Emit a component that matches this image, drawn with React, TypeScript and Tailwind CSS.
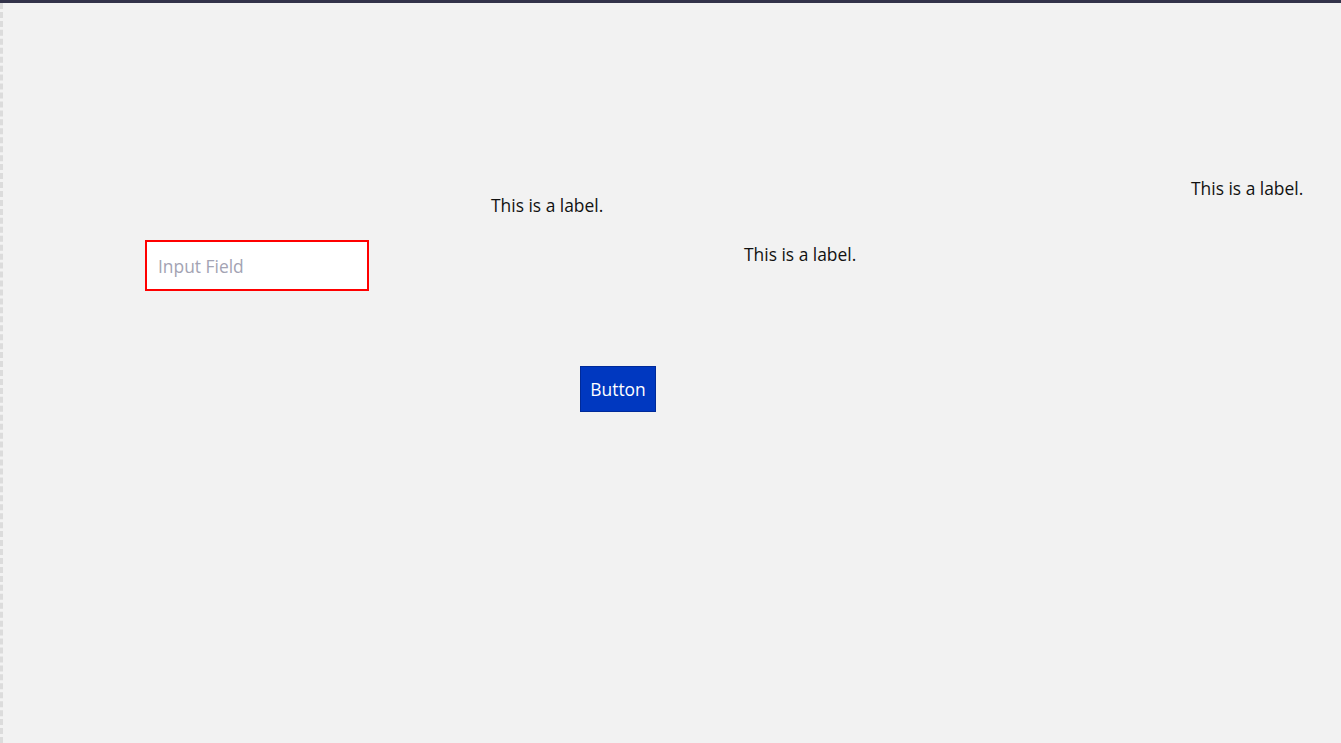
import React from "react";

export default function App() {
  return (
    <div className="h-[743px] w-[1341px] overflow-hidden flex flex-col bg-[#f2f2f2] font-['Open_Sans',sans-serif]">
      <div className="h-[3px] bg-[#33334a] shrink-0" />
      <div className="relative flex-1 border-l-[3px] border-dashed border-[#dcdcdc]">
        <input
          placeholder="Input Field"
          className="absolute left-[142px] top-[237px] w-[224px] h-[51px] bg-white border-2 border-[#ff0000] px-[11px] text-[17.4px] text-[#333] placeholder:text-[#a3a3b3] outline-none"
        />
        <span className="absolute left-[488px] top-[190px] text-[17.4px] text-[#111] leading-[24px]">
          This is a label.
        </span>
        <span className="absolute left-[741px] top-[239px] text-[17.4px] text-[#111] leading-[24px]">
          This is a label.
        </span>
        <span className="absolute left-[1188px] top-[173px] text-[17.4px] text-[#111] leading-[24px]">
          This is a label.
        </span>
        <button className="absolute left-[577px] top-[363px] w-[76px] h-[46px] bg-[#0038c0] border border-[#002a99] text-white text-[17.4px]">
          Button
        </button>
      </div>
    </div>
  );
}
